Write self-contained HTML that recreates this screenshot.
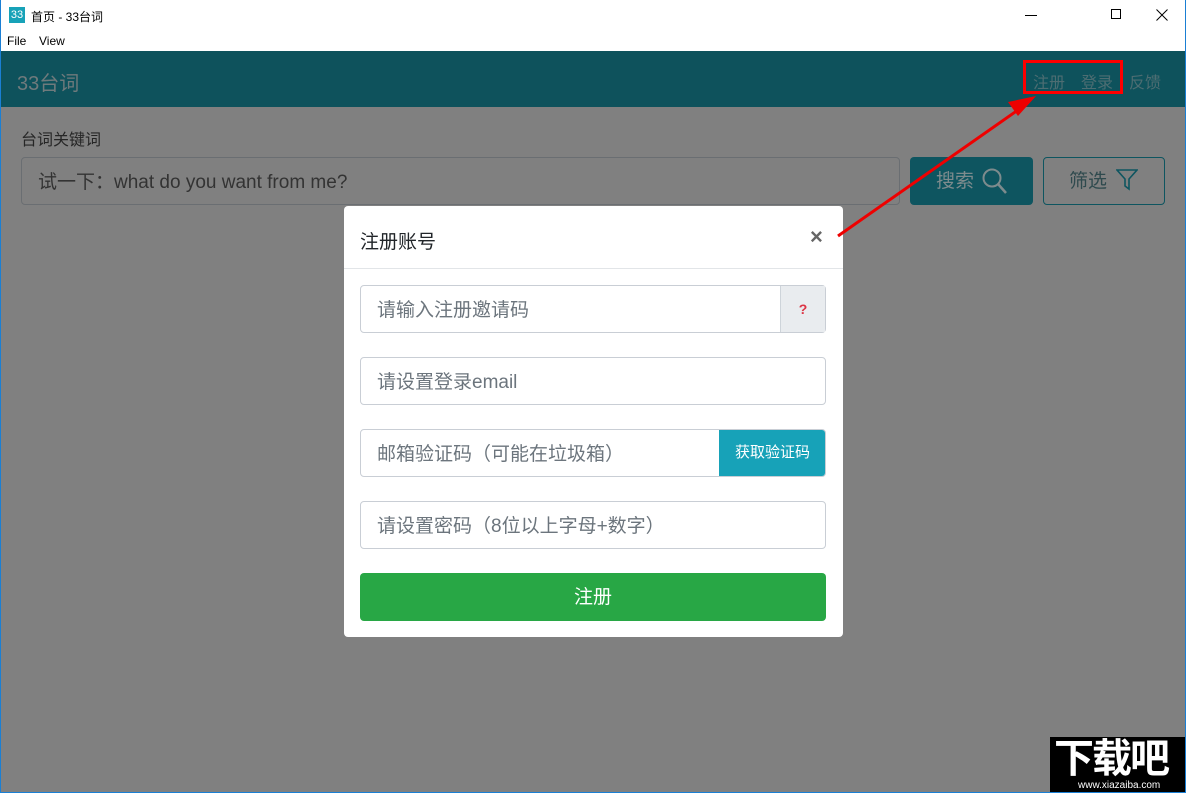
<!DOCTYPE html>
<html><head><meta charset="utf-8"><style>
*{margin:0;padding:0;box-sizing:border-box}
body{width:1186px;height:793px;overflow:hidden;font-family:"Liberation Sans","Noto Sans CJK SC",sans-serif;background:#808080;position:relative}
.abs{position:absolute}
.win{left:0;top:0;width:1186px;height:793px;border:1px solid #1a7fd4;border-top:none}
.title{left:0;top:0;width:1186px;height:30px;background:#fff;font-size:12px;color:#000}
.menu{left:0;top:30px;width:1186px;height:21px;background:#fff;font-size:12px}
.hdr{left:1px;top:51px;width:1184px;height:56px;background:#0e525c}
.inp{border:1px solid #c9ced5;border-radius:4px;background:#fff;font-size:19px;color:#6c757d;padding-left:16px;line-height:50px}
</style></head><body>
<div class="abs title">
 <div class="abs" style="left:9px;top:7px;width:16px;height:16px;background:#17a2b8;color:#fff;font-size:11px;line-height:16px;text-align:center">33</div>
 <div class="abs" style="left:31px;top:8px">首页 - 33台词</div>
 <div class="abs" style="left:1025px;top:15px;width:12px;height:1px;background:#000"></div>
 <div class="abs" style="left:1111px;top:9px;width:10px;height:10px;border:1px solid #000"></div>
 <svg class="abs" style="left:1156px;top:9px" width="12" height="12"><path d="M0.5 0.5l11 11M11.5 0.5l-11 11" stroke="#000" stroke-width="1"/></svg>
</div>
<div class="abs menu"><span class="abs" style="left:7px;top:4px">File</span><span class="abs" style="left:39px;top:4px">View</span></div>
<div class="abs hdr">
 <div class="abs" style="left:16px;top:16px;font-size:20px;color:#6f7a7c">33台词</div>
 <div class="abs" style="left:1032px;top:18px;font-size:16px;color:#4d6d72">注册</div>
 <div class="abs" style="left:1080px;top:18px;font-size:16px;color:#4d6d72">登录</div>
 <div class="abs" style="left:1128px;top:18px;font-size:16px;color:#4d6d72">反馈</div>
</div>
<div class="abs" style="left:21px;top:126px;font-size:16px;color:#262626">台词关键词</div>
<div class="abs" style="left:21px;top:157px;width:879px;height:48px;border:1px solid #6a6e72;border-radius:4px;font-size:19px;color:#333;padding-left:16px;line-height:50px">试一下：what do you want from me?</div>
<div class="abs" style="left:910px;top:157px;width:123px;height:48px;background:#0e5560;border-radius:4px;color:#7d8b8d;font-size:19px;line-height:50px;padding-left:26px">搜索
 <svg class="abs" style="left:72px;top:10px" width="26" height="28" viewBox="0 0 26 28"><circle cx="10" cy="11" r="8.5" fill="none" stroke="#7d8b8d" stroke-width="2"/><path d="M16 17l8 9" stroke="#7d8b8d" stroke-width="2.5"/></svg></div>
<div class="abs" style="left:1043px;top:157px;width:122px;height:48px;border:1px solid #0e5560;border-radius:4px;color:#2f4a4e;font-size:19px;line-height:48px;padding-left:25px">筛选
 <svg class="abs" style="left:72px;top:11px" width="22" height="22" viewBox="0 0 22 22"><path d="M1 1h20l-8 9v10l-4-3v-7z" fill="none" stroke="#0e5560" stroke-width="1.6"/></svg></div>

<div class="abs" style="left:344px;top:206px;width:499px;height:431px;background:#fff;border-radius:4px">
 <div class="abs" style="left:16px;top:21px;font-size:19px;color:#212529">注册账号</div>
 <div class="abs" style="left:466px;top:18px;font-size:22px;color:#666;font-weight:bold">×</div>
 <div class="abs" style="left:0;top:62px;width:499px;height:1px;background:#e2e5e8"></div>
 <div class="abs inp" style="left:16px;top:79px;width:466px;height:48px">请输入注册邀请码
  <div class="abs" style="right:0;top:0;width:45px;height:46px;background:#e9ecef;border-left:1px solid #ced4da;color:#dc3545;font-size:14px;text-align:center;font-weight:bold;line-height:46px">?</div></div>
 <div class="abs inp" style="left:16px;top:151px;width:466px;height:48px">请设置登录email</div>
 <div class="abs inp" style="left:16px;top:223px;width:466px;height:48px;overflow:hidden">邮箱验证码（可能在垃圾箱）
  <div class="abs" style="right:-1px;top:-1px;width:107px;height:48px;background:#17a2b8;color:#fff;font-size:15px;text-align:center;line-height:48px">获取验证码</div></div>
 <div class="abs inp" style="left:16px;top:295px;width:466px;height:48px">请设置密码（8位以上字母+数字）</div>
 <div class="abs" style="left:16px;top:367px;width:466px;height:48px;background:#28a745;border-radius:4px;color:#fff;font-size:19px;text-align:center;line-height:50px">注册</div>
</div>

<div class="abs" style="left:1023px;top:60px;width:100px;height:34px;border:3px solid #f00"></div>
<svg class="abs" style="left:0;top:0" width="1186" height="793"><path d="M838 236L1018 110" stroke="#e00" stroke-width="3"/><path d="M1036 96l-28 6 10 14z" fill="#e00"/></svg>

<div class="abs" style="left:1050px;top:737px;width:136px;height:56px;background:#000">
 <div class="abs" style="left:4px;top:0;color:#fff;font-size:40px;font-weight:bold;letter-spacing:-2px;line-height:44px">下载吧</div>
 <div class="abs" style="left:28px;top:43px;color:#fff;font-size:10px">www.xiazaiba.com</div>
</div>
<div class="abs win"></div>
</body></html>
